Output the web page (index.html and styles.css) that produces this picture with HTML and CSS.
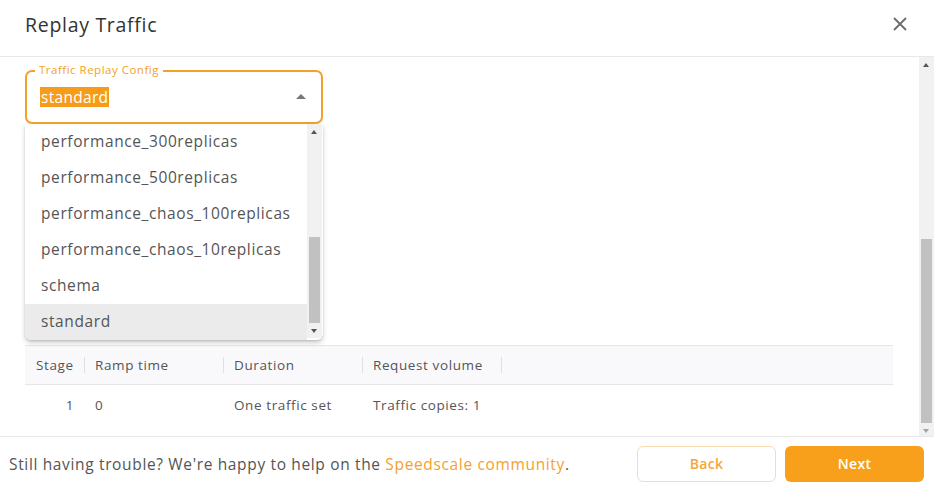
FILE: index.html
```html
<!DOCTYPE html>
<html lang="en">
  <head>
    <meta charset="UTF-8" />
    <title>Replay Traffic</title>
    <link rel="stylesheet" href="styles.css">
  </head>
  <body>
    <div class="dialog">
      <div class="header">
        <h1>Replay Traffic</h1>
        <svg class="close" width="16" height="16" viewBox="0 0 16 16">
          <path d="M2 2 L14 14 M14 2 L2 14" stroke="#6b6b6b" stroke-width="1.8" fill="none" />
        </svg>
      </div>

      <div class="body">
        <div class="content">
          <div class="field">
            <span class="field-label">Traffic Replay Config</span>
            <span class="field-value">standard</span>
            <span class="field-arrow"></span>
          </div>

          <div class="menu">
            <ul>
              <li>performance_300replicas</li>
              <li>performance_500replicas</li>
              <li>performance_chaos_100replicas</li>
              <li>performance_chaos_10replicas</li>
              <li>schema</li>
              <li class="selected">standard</li>
            </ul>
            <div class="scrollbar small">
              <span class="arrow up"></span>
              <div class="track"><div class="thumb" style="margin-top: 98px; height: 86px"></div></div>
              <span class="arrow down"></span>
            </div>
          </div>

          <table class="grid">
            <thead>
              <tr>
                <th class="c-stage">Stage</th>
                <th class="c-ramp">Ramp time</th>
                <th class="c-dur">Duration</th>
                <th class="c-vol">Request volume</th>
                <th class="c-rest"></th>
              </tr>
            </thead>
            <tbody>
              <tr>
                <td class="num">1</td>
                <td>0</td>
                <td>One traffic set</td>
                <td>Traffic copies: 1</td>
                <td></td>
              </tr>
            </tbody>
          </table>
        </div>

        <div class="scrollbar">
          <span class="arrow up"></span>
          <div class="track"><div class="thumb" style="margin-top: 167px; height: 184px"></div></div>
          <span class="arrow down"></span>
        </div>
      </div>

      <div class="footer">
        <p>Still having trouble? We're happy to help on the <a href="#">Speedscale community</a>.</p>
        <div class="actions">
          <button class="btn-outline">Back</button>
          <button class="btn-primary">Next</button>
        </div>
      </div>
    </div>
  </body>
</html>
```

FILE: styles.css
```css
body {
  margin: 0;
  font-family: "Open Sans", "Noto Sans", sans-serif;
  color: #555;
  background: white;
}
.dialog {
  width: 934px;
  height: 492px;
  display: flex;
  flex-direction: column;
}
.header {
  height: 57px;
  flex: none;
  display: flex;
  align-items: center;
  justify-content: space-between;
  padding: 0 26px 0 25px;
  border-bottom: 1px solid #e8e8e8;
  box-sizing: border-box;
}
.header h1 {
  margin: 0;
  font-size: 19.5px;
  letter-spacing: 0.7px;
  font-weight: 400;
  color: #333;
  position: relative;
  top: -4px;
}
.close {
  position: relative;
  top: -4px;
}
.body {
  flex: 1;
  display: flex;
  min-height: 0;
}
.content {
  flex: 1;
  position: relative;
  padding: 13px 26px 0 25px;
}
.field {
  height: 54px;
  width: 298px;
  box-sizing: border-box;
  border: 2px solid #f4a12a;
  border-radius: 7px;
  position: relative;
  display: flex;
  align-items: center;
  padding: 0 13px;
}
.field-label {
  position: absolute;
  top: -10px;
  left: 8px;
  background: white;
  padding: 0 4px;
  font-size: 11.5px;
  letter-spacing: 0.5px;
  color: #f4a12a;
}
.field-value {
  background: #f59c1a;
  color: white;
  font-size: 15.5px;
  letter-spacing: 0.3px;
  padding: 0 1px;
  line-height: 20px;
  margin-top: -1px;
}
.field-arrow {
  position: absolute;
  right: 15px;
  top: 22px;
  border-left: 5px solid transparent;
  border-right: 5px solid transparent;
  border-bottom: 5px solid #777;
}
.menu {
  position: absolute;
  left: 25px;
  top: 67px;
  width: 298px;
  height: 216px;
  background: white;
  border-radius: 0 0 6px 6px;
  box-shadow: 0 3px 5px rgba(0, 0, 0, 0.18), 0 1px 2px rgba(0, 0, 0, 0.12);
  display: flex;
  overflow: hidden;
  z-index: 2;
}
.menu ul {
  list-style: none;
  margin: 0;
  padding: 0;
  flex: 1;
}
.menu li {
  height: 36px;
  line-height: 35px;
  padding-left: 16px;
  font-size: 15.5px;
  letter-spacing: 0.6px;
  color: #555;
}
.menu li.selected {
  background: #ebebeb;
}
.scrollbar {
  width: 15px;
  background: #f1f1f1;
  display: flex;
  flex-direction: column;
  align-items: center;
  flex: none;
}
.scrollbar.small {
  margin-right: 1px;
  height: 214px;
}
.track {
  flex: 1;
  width: 100%;
}
.thumb {
  background: #c1c1c1;
  margin: 0 2px;
}
.arrow {
  height: 15px;
  width: 15px;
  position: relative;
  flex: none;
}
.arrow::after {
  content: "";
  position: absolute;
  left: 4px;
  border-left: 3.5px solid transparent;
  border-right: 3.5px solid transparent;
}
.arrow.up::after {
  top: 6px;
  border-bottom: 4px solid #555;
}
.arrow.down::after {
  top: 6px;
  border-top: 4px solid #a3a3a3;
}
.scrollbar.small .arrow.down::after {
  border-top-color: #555;
}
.grid {
  margin-top: 221px;
  width: 100%;
  border-collapse: collapse;
  font-size: 13.5px;
  letter-spacing: 0.6px;
  border-top: 1px solid #e6e6e6;
}
.grid th {
  background: #f9f9fb;
  height: 38px;
  font-weight: 400;
  text-align: left;
  color: #555;
  padding: 0 10px;
  border-bottom: 1px solid #e6e6e6;
  position: relative;
}
.grid th::after {
  content: "";
  position: absolute;
  right: 0;
  top: 11px;
  height: 16px;
  width: 1px;
  background: #e0e0e0;
}
.grid th.c-rest::after {
  display: none;
}
.grid th.c-stage {
  width: 60px;
  padding-left: 11px;
  box-sizing: border-box;
}
.c-ramp,
.c-dur,
.c-vol {
  width: 139px;
  box-sizing: border-box;
}
.grid td {
  height: 40px;
  padding: 0 10px 6px;
  color: #555;
}
.grid td.num {
  text-align: right;
  padding-right: 11px;
}
.footer {
  height: 56px;
  flex: none;
  border-top: 1px solid #e8e8e8;
  display: flex;
  align-items: center;
  justify-content: space-between;
  padding: 0 10px 2px 9px;
  box-sizing: border-box;
}
.footer p {
  margin: 0;
  font-size: 15.5px;
  letter-spacing: 0.65px;
  color: #555;
}
.footer a {
  color: #f4a12a;
  text-decoration: none;
}
.actions {
  display: flex;
  gap: 9px;
}
.actions button {
  width: 139px;
  height: 36px;
  border-radius: 6px;
  font-family: inherit;
  font-size: 14px;
  letter-spacing: 0.3px;
  font-weight: 600;
  cursor: pointer;
}
.btn-outline {
  background: white;
  border: 1px solid #fbdcae;
  color: #f5a63a;
}
.btn-primary {
  background: #f89f1b;
  border: none;
  color: white;
}
```
